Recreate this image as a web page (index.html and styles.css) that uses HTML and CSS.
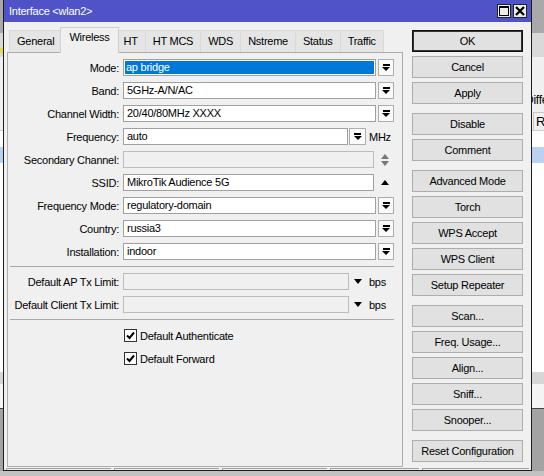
FILE: index.html
```html
<!DOCTYPE html>
<html lang="en">
<head>
    <meta charset="UTF-8">
    <title>Interface &lt;wlan2&gt;</title>
    <link rel="stylesheet" href="styles.css">
</head>
<body>
<div class="desktop">

    <!-- window behind the dialog -->
    <div class="backwin">
        <div class="bw-title"></div>
        <div class="bw-toolbar"><span class="bw-icon"></span></div>
        <div class="bw-filter"><span class="bw-caption">Difference</span></div>
        <div class="bw-list">
            <div class="bw-head"><span class="bw-cell">R</span></div>
            <div class="bw-item"></div>
            <div class="bw-item selected"></div>
            <div class="bw-item"></div>
        </div>
        <div class="bw-scroll"></div>
    </div>

    <div class="dialog">
        <div class="titlebar">
            <span class="title">Interface &lt;wlan2&gt;</span>
            <div class="tb-btns">
                <span class="tb-btn">
                    <svg width="10" height="10" viewBox="0 0 10 10"><rect x="0.5" y="0.5" width="9" height="9" fill="none" stroke="#000"/><rect x="0" y="0" width="10" height="2" fill="#000"/></svg>
                </span>
                <span class="tb-btn">
                    <svg width="10" height="10" viewBox="0 0 10 10"><path d="M1 1L9 9M9 1L1 9" stroke="#000" stroke-width="2.2"/></svg>
                </span>
            </div>
        </div>

        <div class="body">
            <div class="tabs-col">
                <div class="tabs">
                    <div class="tab">General</div>
                    <div class="tab active">Wireless</div>
                    <div class="tab">HT</div>
                    <div class="tab">HT MCS</div>
                    <div class="tab">WDS</div>
                    <div class="tab">Nstreme</div>
                    <div class="tab">Status</div>
                    <div class="tab">Traffic</div>
                </div>

                <div class="panel">
                    <div class="row">
                        <span class="label">Mode:</span>
                        <div class="ctrl"><div class="input sel">ap bridge</div><span class="dd"></span></div>
                    </div>
                    <div class="row">
                        <span class="label">Band:</span>
                        <div class="ctrl"><div class="input">5GHz-A/N/AC</div><span class="dd"></span></div>
                    </div>
                    <div class="row">
                        <span class="label">Channel Width:</span>
                        <div class="ctrl"><div class="input">20/40/80MHz XXXX</div><span class="dd"></span></div>
                    </div>
                    <div class="row">
                        <span class="label">Frequency:</span>
                        <div class="ctrl"><div class="input">auto</div><span class="dd tight"></span><span class="unit">MHz</span></div>
                    </div>
                    <div class="row">
                        <span class="label">Secondary Channel:</span>
                        <div class="ctrl"><div class="input off"></div><span class="side"><i class="tri up grey"></i><i class="tri down grey"></i></span></div>
                    </div>
                    <div class="row">
                        <span class="label">SSID:</span>
                        <div class="ctrl"><div class="input">MikroTik Audience 5G</div><span class="side"><i class="tri up"></i></span></div>
                    </div>
                    <div class="row">
                        <span class="label">Frequency Mode:</span>
                        <div class="ctrl"><div class="input">regulatory-domain</div><span class="dd"></span></div>
                    </div>
                    <div class="row">
                        <span class="label">Country:</span>
                        <div class="ctrl"><div class="input">russia3</div><span class="dd"></span></div>
                    </div>
                    <div class="row">
                        <span class="label">Installation:</span>
                        <div class="ctrl"><div class="input">indoor</div><span class="dd"></span></div>
                    </div>

                    <div class="sep"></div>

                    <div class="row">
                        <span class="label">Default AP Tx Limit:</span>
                        <div class="ctrl"><div class="input off"></div><span class="limit"><i class="tri down"></i><span>bps</span></span></div>
                    </div>
                    <div class="row">
                        <span class="label">Default Client Tx Limit:</span>
                        <div class="ctrl"><div class="input off"></div><span class="limit"><i class="tri down"></i><span>bps</span></span></div>
                    </div>

                    <div class="sep checks"></div>

                    <div class="check-row">
                        <span class="box"><svg width="11" height="11" viewBox="0 0 11 11"><path d="M2 5.5L4.5 8L9 2.5" fill="none" stroke="#000" stroke-width="2"/></svg></span>
                        <span>Default Authenticate</span>
                    </div>
                    <div class="check-row">
                        <span class="box"><svg width="11" height="11" viewBox="0 0 11 11"><path d="M2 5.5L4.5 8L9 2.5" fill="none" stroke="#000" stroke-width="2"/></svg></span>
                        <span>Default Forward</span>
                    </div>
                </div>
            </div>

            <div class="btns">
                <div class="btn default">OK</div>
                <div class="btn">Cancel</div>
                <div class="btn">Apply</div>

                <div class="btn group">Disable</div>
                <div class="btn">Comment</div>

                <div class="btn group">Advanced Mode</div>
                <div class="btn">Torch</div>
                <div class="btn">WPS Accept</div>
                <div class="btn">WPS Client</div>
                <div class="btn">Setup Repeater</div>

                <div class="btn group">Scan...</div>
                <div class="btn">Freq. Usage...</div>
                <div class="btn">Align...</div>
                <div class="btn">Sniff...</div>
                <div class="btn">Snooper...</div>

                <div class="btn group">Reset Configuration</div>
            </div>
        </div>

        <div class="status">
            <span class="seg w1"></span>
            <span class="seg w1"></span>
            <span class="seg w1"></span>
            <span class="seg w2"></span>
            <span class="seg last"></span>
        </div>
    </div>

    <div class="bottom-band"></div>
</div>
</body>
</html>
```

FILE: styles.css
```css
body {
    margin: 0;
    font-family: "Liberation Sans", Arial, sans-serif;
    font-size: 11px;
    letter-spacing: -0.25px;
    color: #000;
    background: #a3a3a3;
}

.desktop {
    position: relative;
    width: 544px;
    height: 476px;
    overflow: hidden;
    background: #a3a3a3;
}

/* ---------- back window ---------- */
.backwin {
    position: absolute;
    left: 0;
    top: 0;
    width: 544px;
    height: 408px;
    background: #f4f4f4;
    border-bottom: 1px solid #444;
}

.bw-title {
    height: 33px;
    background: #a9a9a9;
}

.bw-toolbar {
    height: 24px;
    padding-top: 15px;
    box-sizing: border-box;
    background: #d9d9d9;
}

.bw-icon {
    display: block;
    width: 6px;
    height: 5px;
    background: #e8d84a;
}

.bw-filter {
    height: 55px;
    background: #f0f0f0;
    padding-top: 36px;
    box-sizing: border-box;
}

.bw-caption {
    margin-left: 525px;
    font-size: 12px;
    white-space: nowrap;
}

.bw-list {
    height: 260px;
    background: #fff;
}

.bw-head {
    height: 18px;
    background: #f0f0f0;
    border-bottom: 1px solid #d0d0d0;
}

.bw-cell {
    display: inline-block;
    margin-left: 533px;
    padding-left: 2px;
    height: 17px;
    width: 20px;
    border-left: 1px solid #c8c8c8;
    border-top: 1px solid #c8c8c8;
    font-size: 13px;
    line-height: 17px;
}

.bw-item {
    height: 16px;
}

.bw-item.selected {
    background: #b8d2f0;
}

.bw-scroll {
    height: 12px;
    background: #d6d6d6;
}

.bottom-band {
    position: absolute;
    left: 0;
    top: 471px;
    width: 544px;
    height: 5px;
    background: #c2c2c2;
}

/* ---------- dialog ---------- */
.dialog {
    position: absolute;
    left: 3px;
    top: -1px;
    width: 527px;
    height: 470px;
    border: 1px solid #1c1c1c;
    background: #f0f0f0;
    display: flex;
    flex-direction: column;
}

.titlebar {
    height: 22px;
    flex: none;
    display: flex;
    align-items: center;
    padding-left: 5px;
    background: #5053c8;
    color: #fff;
}

.tb-btns {
    margin-left: auto;
    margin-right: 4px;
    display: flex;
    gap: 2px;
}

.tb-btn {
    width: 14px;
    height: 14px;
    box-sizing: border-box;
    border: 1px solid #222;
    background: #ececec;
    display: flex;
    align-items: center;
    justify-content: center;
}

.body {
    flex: 1;
    display: flex;
    padding: 5px 8px 0 3px;
}

.tabs-col {
    width: 396px;
    display: flex;
    flex-direction: column;
}

.tabs {
    height: 25px;
    display: flex;
    align-items: flex-end;
    padding-left: 3px;
    position: relative;
    z-index: 1;
}

.tab {
    height: 22px;
    box-sizing: border-box;
    padding: 0 7px;
    margin-left: -1px;
    border: 1px solid #d9d9d9;
    border-bottom: none;
    background: #e5e5e5;
    line-height: 21px;
    white-space: nowrap;
}

.tab.active {
    height: 26px;
    margin: 0 -2px -1px -2px;
    padding: 0 8px;
    background: #f0f0f0;
    border-color: #d0d0d0;
    line-height: 19px;
    position: relative;
}

.panel {
    flex: 1;
    border: 1px solid #adadad;
    padding-top: 6px;
}

.row {
    height: 17px;
    margin-bottom: 6px;
    display: flex;
    align-items: center;
}

.label {
    width: 115px;
    box-sizing: border-box;
    padding-right: 4px;
    text-align: right;
    white-space: nowrap;
}

.ctrl {
    width: 271px;
    display: flex;
    align-items: center;
}

.input {
    flex: 1;
    height: 17px;
    box-sizing: border-box;
    border: 1px solid #a0a0a0;
    background: #fff;
    padding: 0 3px;
    line-height: 15px;
    white-space: nowrap;
    overflow: hidden;
}

.input.sel {
    background: #0078d7;
    color: #fff;
    box-shadow: inset 0 0 0 1px #fff;
    padding-left: 2px;
}

.input.off {
    background: #f0f0f0;
    border-color: #bcbcbc;
}

/* drop-down button: bar above a down arrow */
.dd {
    width: 16px;
    height: 17px;
    margin-left: 2px;
    box-sizing: border-box;
    border: 1px solid #adadad;
    background: #fafafa;
    display: flex;
    flex-direction: column;
    align-items: center;
    justify-content: center;
}

.dd::before {
    content: "";
    width: 7px;
    height: 2px;
    margin-bottom: 1px;
    background: #000;
}

.dd::after {
    content: "";
    border-left: 4px solid transparent;
    border-right: 4px solid transparent;
    border-top: 4px solid #000;
}

.dd.tight {
    width: 17px;
    margin-left: 1px;
}

.unit {
    padding-left: 3px;
    width: 25px;
}

.side {
    width: 18px;
    display: flex;
    flex-direction: column;
    align-items: center;
    gap: 2px;
    padding-left: 2px;
}

.tri {
    display: block;
    width: 0;
    height: 0;
    border-left: 4.5px solid transparent;
    border-right: 4.5px solid transparent;
}

.tri.up {
    border-bottom: 5px solid #000;
}

.tri.down {
    border-top: 5px solid #000;
}

.tri.grey.up {
    border-bottom-color: #777;
}

.tri.grey.down {
    border-top-color: #777;
}

.limit {
    width: 45px;
    display: flex;
    align-items: center;
    padding-left: 5px;
    box-sizing: border-box;
    gap: 7px;
}

.sep {
    border-top: 1px solid #a8a8a8;
    margin: 0 8px 6px 2px;
}

.sep.checks {
    margin-bottom: 4px;
}

.check-row {
    height: 23px;
    display: flex;
    align-items: center;
    padding-left: 116px;
}

.box {
    width: 13px;
    height: 13px;
    box-sizing: border-box;
    border: 1px solid #333;
    background: #fff;
    margin-right: 3px;
    display: flex;
    align-items: center;
    justify-content: center;
}

/* ---------- right button column ---------- */
.btns {
    width: 111px;
    margin-left: 9px;
    padding-top: 3px;
    display: flex;
    flex-direction: column;
}

.btn {
    height: 22px;
    box-sizing: border-box;
    margin-bottom: 4px;
    border: 1px solid #adadad;
    background: #e1e1e1;
    text-align: center;
    line-height: 20px;
    white-space: nowrap;
}

.btn.group {
    margin-top: 5px;
}

.btn.default {
    border-color: #111;
    box-shadow: inset 0 0 0 1px #333;
}

/* ---------- status bar ---------- */
.status {
    height: 3px;
    flex: none;
    display: flex;
    gap: 3px;
    padding: 0 2px;
    align-items: flex-end;
}

.seg {
    height: 1px;
    border-top: 1px solid #a0a0a0;
    border-left: 1px solid #a0a0a0;
}

.seg.w1 {
    width: 104px;
}

.seg.w2 {
    width: 88px;
}

.seg.last {
    flex: 1;
}
```
